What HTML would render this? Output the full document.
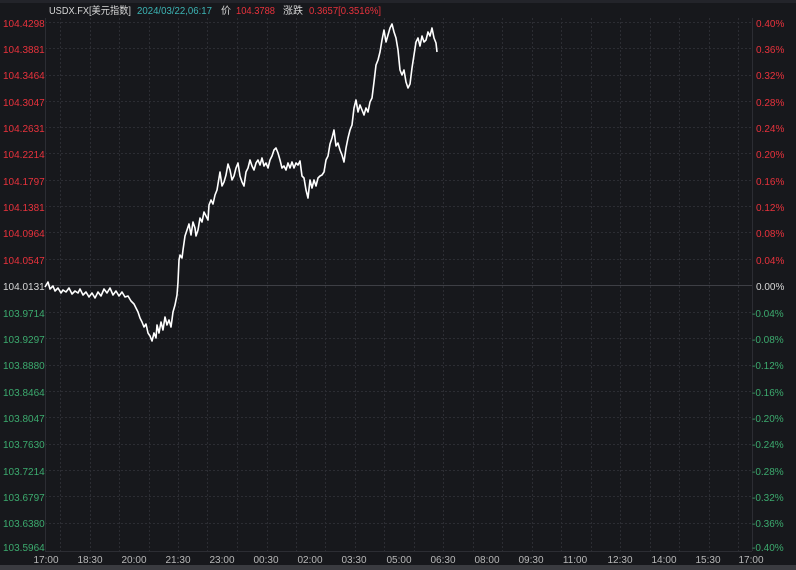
<!DOCTYPE html>
<html><head><meta charset="utf-8"><style>
html,body{margin:0;padding:0;background:#17181c;width:796px;height:570px;overflow:hidden;font-family:"Liberation Sans","Noto Sans CJK SC",sans-serif;}
</style></head><body>
<svg width="796" height="570" xmlns="http://www.w3.org/2000/svg" font-family="Liberation Sans, Noto Sans CJK SC, sans-serif" font-size="10">
<rect width="796" height="570" fill="#17181c"/>
<rect x="0" y="0" width="796" height="3" fill="#23242a"/>
<rect x="0" y="565" width="796" height="5" fill="#3a3b40"/>
<g id="grid" stroke="#2c2d33" stroke-width="1" stroke-dasharray="2,2">
<line x1="45" y1="22.5" x2="752" y2="22.5"/><line x1="45" y1="48.5" x2="752" y2="48.5"/><line x1="45" y1="75.5" x2="752" y2="75.5"/><line x1="45" y1="101.5" x2="752" y2="101.5"/><line x1="45" y1="127.5" x2="752" y2="127.5"/><line x1="45" y1="153.5" x2="752" y2="153.5"/><line x1="45" y1="180.5" x2="752" y2="180.5"/><line x1="45" y1="206.5" x2="752" y2="206.5"/><line x1="45" y1="232.5" x2="752" y2="232.5"/><line x1="45" y1="259.5" x2="752" y2="259.5"/>
<line x1="45" y1="312.5" x2="752" y2="312.5"/><line x1="45" y1="338.5" x2="752" y2="338.5"/><line x1="45" y1="365.5" x2="752" y2="365.5"/><line x1="45" y1="391.5" x2="752" y2="391.5"/><line x1="45" y1="417.5" x2="752" y2="417.5"/><line x1="45" y1="444.5" x2="752" y2="444.5"/><line x1="45" y1="470.5" x2="752" y2="470.5"/><line x1="45" y1="496.5" x2="752" y2="496.5"/><line x1="45" y1="523.5" x2="752" y2="523.5"/>
<line x1="60.5" y1="18" x2="60.5" y2="551"/><line x1="90.5" y1="18" x2="90.5" y2="551"/><line x1="119.5" y1="18" x2="119.5" y2="551"/><line x1="149.5" y1="18" x2="149.5" y2="551"/><line x1="178.5" y1="18" x2="178.5" y2="551"/><line x1="207.5" y1="18" x2="207.5" y2="551"/><line x1="237.5" y1="18" x2="237.5" y2="551"/><line x1="267.5" y1="18" x2="267.5" y2="551"/><line x1="296.5" y1="18" x2="296.5" y2="551"/><line x1="325.5" y1="18" x2="325.5" y2="551"/><line x1="355.5" y1="18" x2="355.5" y2="551"/><line x1="384.5" y1="18" x2="384.5" y2="551"/><line x1="414.5" y1="18" x2="414.5" y2="551"/><line x1="443.5" y1="18" x2="443.5" y2="551"/><line x1="473.5" y1="18" x2="473.5" y2="551"/><line x1="502.5" y1="18" x2="502.5" y2="551"/><line x1="532.5" y1="18" x2="532.5" y2="551"/><line x1="561.5" y1="18" x2="561.5" y2="551"/><line x1="591.5" y1="18" x2="591.5" y2="551"/><line x1="620.5" y1="18" x2="620.5" y2="551"/><line x1="650.5" y1="18" x2="650.5" y2="551"/><line x1="679.5" y1="18" x2="679.5" y2="551"/><line x1="709.5" y1="18" x2="709.5" y2="551"/><line x1="738.5" y1="18" x2="738.5" y2="551"/>
</g>
<line x1="45" y1="285.5" x2="752" y2="285.5" stroke="#3e3f45" stroke-width="1"/>
<line x1="45.5" y1="18" x2="45.5" y2="551" stroke="#2c2d33"/>
<line x1="752.5" y1="18" x2="752.5" y2="551" stroke="#2c2d33"/>
<line x1="45" y1="551.5" x2="752" y2="551.5" stroke="#2c2d33"/>
<text x="49" y="14" fill="#d8d8d8" textLength="82" lengthAdjust="spacingAndGlyphs">USDX.FX[美元指数]</text>
<text x="137" y="14" fill="#3cb4b4" textLength="75" lengthAdjust="spacingAndGlyphs">2024/03/22,06:17</text>
<text x="221" y="14" fill="#d8d8d8">价</text>
<text x="236" y="14" fill="#e8323c" textLength="39" lengthAdjust="spacingAndGlyphs">104.3788</text>
<text x="283" y="14" fill="#d8d8d8">涨跌</text>
<text x="309" y="14" fill="#e8323c" textLength="72" lengthAdjust="spacingAndGlyphs">0.3657[0.3516%]</text>
<g fill="#e8323c">
<text x="3" y="27">104.4298</text><text x="3" y="53">104.3881</text><text x="3" y="79">104.3464</text><text x="3" y="106">104.3047</text><text x="3" y="132">104.2631</text><text x="3" y="158">104.2214</text><text x="3" y="185">104.1797</text><text x="3" y="211">104.1381</text><text x="3" y="237">104.0964</text><text x="3" y="264">104.0547</text>
<text x="756" y="27">0.40%</text><text x="756" y="53">0.36%</text><text x="756" y="79">0.32%</text><text x="756" y="106">0.28%</text><text x="756" y="132">0.24%</text><text x="756" y="158">0.20%</text><text x="756" y="185">0.16%</text><text x="756" y="211">0.12%</text><text x="756" y="237">0.08%</text><text x="756" y="264">0.04%</text>
</g>
<text x="3" y="290" fill="#d8d8d8">104.0131</text><text x="756" y="290" fill="#d8d8d8">0.00%</text>
<g fill="#3caa6e">
<text x="3" y="317">103.9714</text><text x="3" y="343">103.9297</text><text x="3" y="369">103.8880</text><text x="3" y="396">103.8464</text><text x="3" y="422">103.8047</text><text x="3" y="448">103.7630</text><text x="3" y="475">103.7214</text><text x="3" y="501">103.6797</text><text x="3" y="527">103.6380</text><text x="3" y="551">103.5964</text>
<text x="752" y="317">-0.04%</text><text x="752" y="343">-0.08%</text><text x="752" y="369">-0.12%</text><text x="752" y="396">-0.16%</text><text x="752" y="422">-0.20%</text><text x="752" y="448">-0.24%</text><text x="752" y="475">-0.28%</text><text x="752" y="501">-0.32%</text><text x="752" y="527">-0.36%</text><text x="752" y="551">-0.40%</text>
</g>
<g fill="#b8b8b8" text-anchor="middle">
<text x="46" y="563">17:00</text><text x="90" y="563">18:30</text><text x="134" y="563">20:00</text><text x="178" y="563">21:30</text><text x="222" y="563">23:00</text><text x="266" y="563">00:30</text><text x="310" y="563">02:00</text><text x="354" y="563">03:30</text><text x="399" y="563">05:00</text><text x="443" y="563">06:30</text><text x="487" y="563">08:00</text><text x="531" y="563">09:30</text><text x="575" y="563">11:00</text><text x="620" y="563">12:30</text><text x="664" y="563">14:00</text><text x="708" y="563">15:30</text><text x="751" y="563">17:00</text>
</g>
<polyline fill="none" stroke="#ffffff" stroke-width="1.6" stroke-linejoin="round" points="
45,287 48,282 50,289 53,286 55,291 58,288 61,293 63,290 66,292 69,288 72,294 75,291 78,293 80,289 83,295 86,292 89,297 92,293 95,298 98,292 101,296 104,289 107,293 110,288 113,295 116,291 119,296 122,292 125,297 128,296 131,301 134,304 136,308 138,312 140,318 142,322 144,327 146,324 148,333 150,336 152,341 154,333 156,338 157,325 159,333 161,322 163,330 165,317 167,325 169,320 171,327 173,312 175,305 177,295 178,282 179,260 180,255 182,258 183,250 185,236 187,230 189,224 191,235 193,222 195,228 196,236 198,230 200,218 202,222 204,212 206,216 208,220 209,205 211,200 213,204 215,195 217,190 219,178 220,172 222,186 224,182 226,175 228,164 230,170 232,180 234,176 236,168 238,163 240,176 242,182 244,186 246,172 248,168 250,160 252,166 254,170 256,163 258,160 260,165 262,158 264,166 266,163 268,168 270,160 272,156 274,150 276,148 278,153 280,160 282,168 284,166 286,170 288,163 290,168 292,162 294,168 296,163 298,165 300,161 302,176 304,178 306,190 308,198 310,180 312,188 314,180 316,186 318,178 320,176 322,175 324,172 326,160 328,156 330,144 332,138 334,130 336,146 338,143 340,150 342,155 344,162 346,148 348,138 350,130 352,125 354,108 356,100 358,112 360,105 362,110 364,115 366,108 368,112 370,102 372,98 374,82 376,65 378,60 380,52 382,40 384,30 386,42 388,35 390,28 392,24 394,32 396,38 398,50 400,70 402,75 404,70 406,82 408,88 410,84 412,68 414,55 416,42 418,38 420,46 422,36 424,42 426,40 428,32 430,36 432,28 434,38 436,43 437,52"/>
</svg>
</body></html>
